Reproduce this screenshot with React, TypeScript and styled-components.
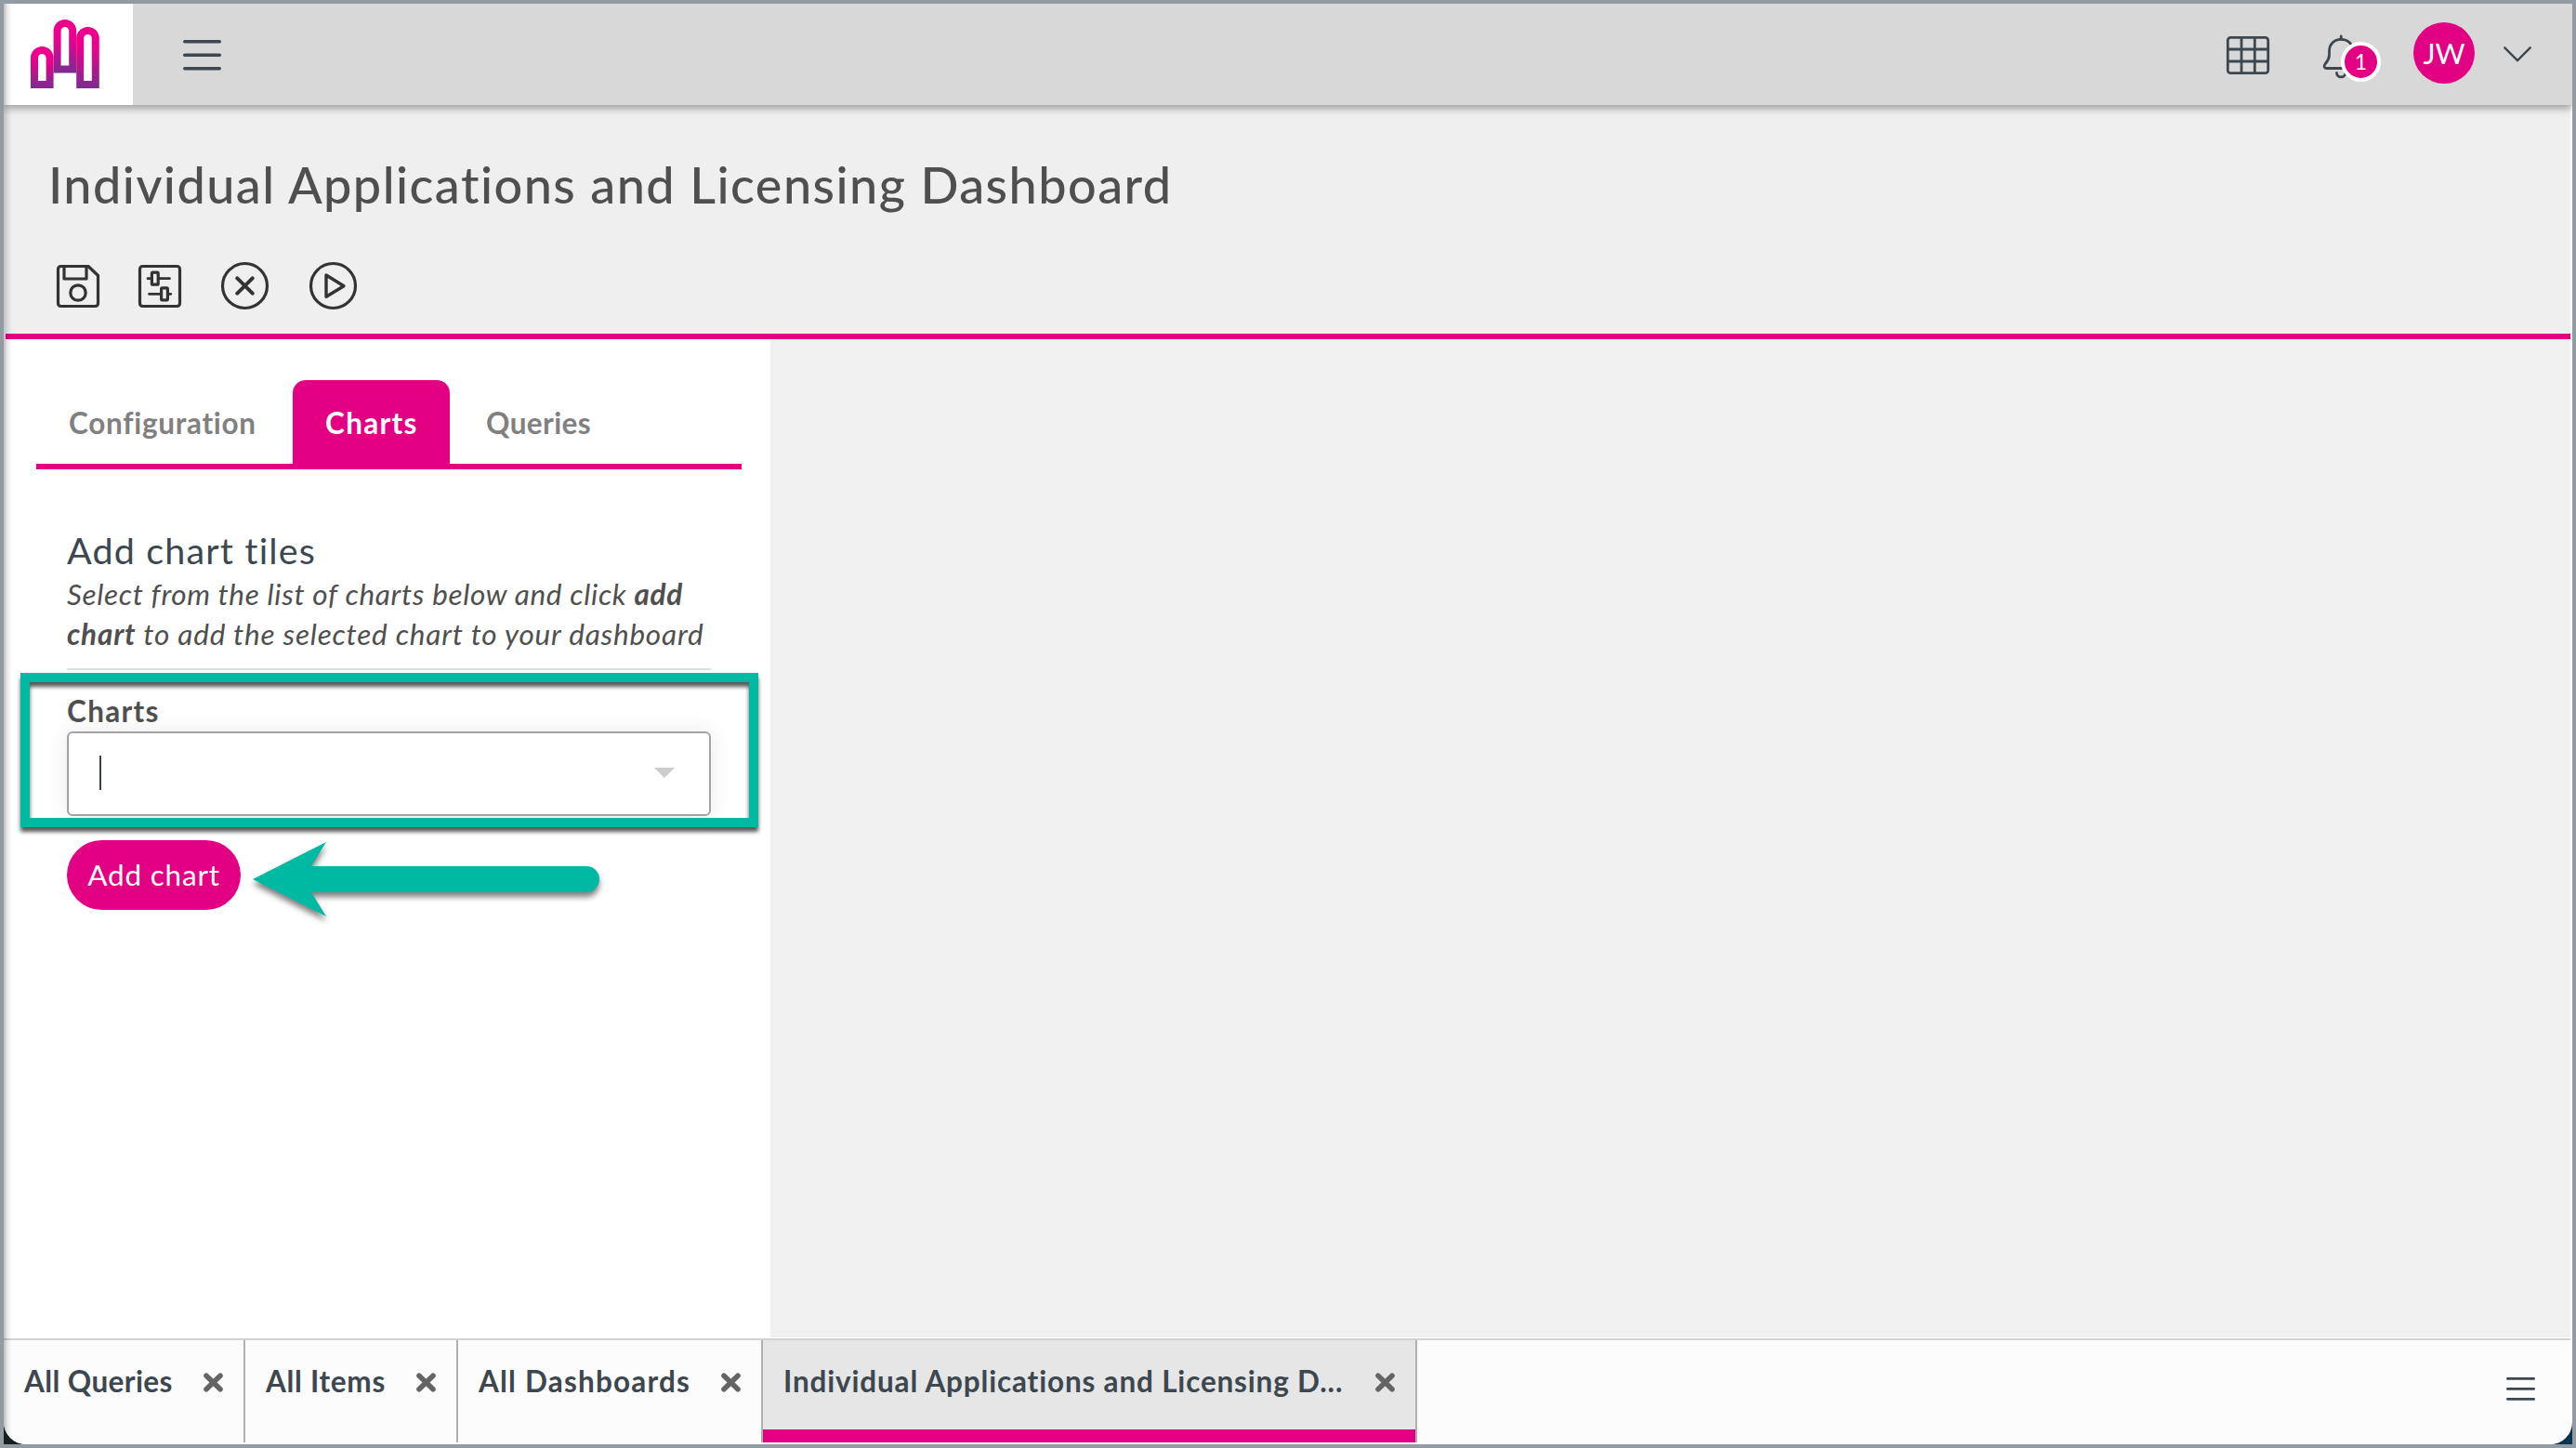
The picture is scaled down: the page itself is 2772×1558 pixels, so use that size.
import React from "react";
import styled, { createGlobalStyle } from "styled-components";

const PINK = "#e20083";
const TEAL = "#00b9a3";
const SLATE = "#3d474f";
const INK = "#4f4f4f";

const GlobalStyle = createGlobalStyle`
  * { box-sizing: border-box; }
  body { margin: 0; font-family: Lato, "Open Sans", sans-serif; color: ${INK}; }
  button, p, h1, h2, ul { margin: 0; padding: 0; font: inherit; letter-spacing: inherit; }
  button { border: 0; background: none; color: inherit; cursor: pointer; }
  svg { display: block; flex: none; overflow: visible; }
`;

const Desktop = styled.div`
  width: 2772px;
  height: 1558px;
  border: 4px solid #929ba1;
  background: linear-gradient(90deg, #16211f, #0c3350);
  overflow: hidden;
`;

const Window = styled.div`
  position: relative;
  display: flex;
  flex-direction: column;
  height: 1550px;
  background: #fff;
  border-radius: 0 0 24px 24px;
  overflow: hidden;
`;

const EdgeShade = styled.div`
  position: absolute;
  z-index: 5;
  left: 0;
  top: 0;
  bottom: 0;
  width: 9px;
  pointer-events: none;
  background: linear-gradient(90deg, rgba(0, 0, 0, 0.26), rgba(0, 0, 0, 0.08) 45%, rgba(0, 0, 0, 0));
`;

const Header = styled.header`
  position: relative;
  z-index: 2;
  display: flex;
  align-items: center;
  flex: none;
  height: 109px;
  background: #d8d8d8;
  box-shadow: 0 3px 9px rgba(0, 0, 0, 0.38);
`;

const LogoBox = styled.div`
  width: 139px;
  height: 109px;
  padding: 17px 0 0 29px;
  background: #fff;
`;

const MenuButton = styled.button`
  margin: 2px 0 0 54px;
`;

const HeaderActions = styled.div`
  display: flex;
  align-items: center;
  margin-left: auto;
  padding: 2px 44px 0 0;
`;

const BellButton = styled.button`
  position: relative;
  margin-left: 56px;
  width: 64px;
  height: 50px;
`;

const Badge = styled.span`
  position: absolute;
  left: 21px;
  top: 10px;
  width: 43px;
  height: 43px;
  border: 4px solid #fff;
  border-radius: 50%;
  background: ${PINK};
  color: #fff;
  font-size: 23px;
  line-height: 34px;
  text-align: center;
`;

const Avatar = styled.div`
  width: 66px;
  height: 66px;
  margin: 0 31px 5px 35px;
  border-radius: 50%;
  background: ${PINK};
  color: #fff;
  font-size: 31px;
  font-weight: 400;
  line-height: 66px;
  text-align: center;
`;

const TitleArea = styled.section`
  flex: none;
  height: 252px;
  margin: 0 2px;
  padding: 56px 0 0 46px;
  background: #efefef;
  border-bottom: 6px solid ${PINK};
`;

const Title = styled.h1`
  font-size: 54px;
  font-weight: 500;
  line-height: 60px;
  letter-spacing: 1.44px;
`;

const Toolbar = styled.div`
  display: flex;
  align-items: center;
  height: 51px;
  margin-top: 53px;
  padding-left: 9px;
`;

const Tool = styled.button<{ $gap: number }>`
  margin-right: ${(p) => p.$gap}px;
`;

const Body = styled.div`
  display: flex;
  flex: none;
  height: 1074px;
  margin-right: 2px;
`;

const Sidebar = styled.aside`
  position: relative;
  width: 825px;
  padding: 44px 31px 0 35px;
  background: #fff;
`;

const Canvas = styled.main`
  flex: 1;
  background: #f0f0f0;
`;

const Tabs = styled.div`
  display: flex;
  height: 96px;
  border-bottom: 6px solid ${PINK};
`;

const Tab = styled.button<{ $active?: boolean; $width: number; $inset: number; $spacing: number }>`
  width: ${(p) => p.$width}px;
  height: 90px;
  padding: 1px 0 0 ${(p) => p.$inset}px;
  text-align: left;
  font-size: 31.5px;
  font-weight: 700;
  letter-spacing: ${(p) => p.$spacing}px;
  border-radius: 14px 14px 0 0;
  color: ${(p) => (p.$active ? "#fff" : "#808080")};
  background: ${(p) => (p.$active ? PINK : "transparent")};
`;

const Panel = styled.div`
  width: 693px;
  margin: 65px 0 0 33px;
`;

const PanelTitle = styled.h2`
  color: ${SLATE};
  font-size: 39.5px;
  font-weight: 400;
  line-height: 44px;
  letter-spacing: 1.15px;
`;

const Hint = styled.p`
  height: 107px;
  padding-top: 4px;
  border-bottom: 2px solid #dfdfdf;
  font-size: 31.5px;
  font-style: italic;
  line-height: 43px;
  white-space: nowrap;
`;

const HintLine = styled.span<{ $spacing: number }>`
  display: block;
  letter-spacing: ${(p) => p.$spacing}px;
`;

const Label = styled.label`
  display: block;
  margin-top: 24px;
  font-size: 31.5px;
  font-weight: 700;
  line-height: 40px;
  letter-spacing: 1.3px;
`;

const Select = styled.div`
  display: flex;
  align-items: center;
  justify-content: space-between;
  height: 91px;
  margin-top: 2px;
  padding: 0 37px 2px 33px;
  border: 2px solid #a3a3a3;
  border-radius: 6px;
  background: #fff;
  box-shadow: 0 0 24px rgba(0, 0, 0, 0.09);
`;

const Caret = styled.span`
  width: 2px;
  height: 37px;
  background: #36424c;
`;

const AddButton = styled.button`
  display: block;
  width: 187px;
  height: 75px;
  margin-top: 26px;
  border-radius: 38px;
  background: ${PINK};
  color: #fff;
  font-size: 31.5px;
  line-height: 73px;
  letter-spacing: 0.8px;
`;

const Highlight = styled.div`
  position: absolute;
  left: 18px;
  top: 359px;
  width: 794px;
  height: 166px;
  border: 10px solid ${TEAL};
  filter: drop-shadow(0 5px 2px rgba(0, 0, 0, 0.65));
`;

const Arrow = styled.svg`
  position: absolute;
  left: 268px;
  top: 541px;
  filter: drop-shadow(0 5px 3px rgba(0, 0, 0, 0.5));
`;

const Footer = styled.footer`
  display: flex;
  flex: none;
  height: 115px;
  margin: 1px 2px 0 0;
  padding-bottom: 2px;
  border-top: 2px solid #d0d3d2;
  background: #fcfcfc;
`;

const PageTab = styled.div<{ $width: number; $spacing: number; $active?: boolean }>`
  display: flex;
  justify-content: space-between;
  width: ${(p) => p.$width}px;
  height: 110px;
  padding: 25px 22px 0 22px;
  border-right: 2px solid #b0b0b0;
  color: ${SLATE};
  background: ${(p) => (p.$active ? "#e6e6e6" : "transparent")};
  background-image: ${(p) => (p.$active ? `linear-gradient(${PINK}, ${PINK})` : "none")};
  background-size: 100% 14px;
  background-position: bottom;
  background-repeat: no-repeat;
  font-size: 31.5px;
  font-weight: 700;
  line-height: 38px;
  letter-spacing: ${(p) => p.$spacing}px;
  white-space: nowrap;
`;

const CloseButton = styled.button`
  height: 21px;
  margin-top: 10px;
`;

const FooterMenu = styled.button`
  margin: 40px 38px 0 auto;
  height: 25px;
`;

const bars = [
  { x: 4, top: 33, bottom: 70 },
  { x: 28.6, top: 4, bottom: 53.5 },
  { x: 53.2, top: 12, bottom: 70 },
];

const Logo = () => (
  <svg width="75" height="75" fill="none" strokeWidth="8">
    {bars.map((b, i) => (
      <g key={i}>
        <linearGradient id={`bar${i}`} gradientUnits="userSpaceOnUse" x1="0" x2="0" y1={b.top} y2={b.bottom + 4}>
          <stop offset="0.3" stopColor="#ec008c" />
          <stop offset="1" stopColor="#7a2d90" />
        </linearGradient>
        <path
          stroke={`url(#bar${i})`}
          d={`M${b.x} ${b.bottom}V${b.top + 8.2}a8.3 8.2 0 0 1 16.6 0V${b.bottom}z`}
        />
      </g>
    ))}
  </svg>
);

const Lines = ({ width, step, stroke }: { width: number; step: number; stroke: number }) => {
  const r = stroke / 2;
  return (
    <svg width={width} height={step * 2 + stroke} stroke={SLATE} strokeWidth={stroke} strokeLinecap="round">
      {[0, 1, 2].map((n) => (
        <path key={n} d={`M${r} ${r + n * step}H${width - r}`} />
      ))}
    </svg>
  );
};

const tool = { fill: "none", stroke: "#333", strokeWidth: 3.2, strokeLinecap: "round", strokeLinejoin: "round" } as const;

const SaveIcon = () => (
  <svg width="46" height="46" {...tool}>
    <path d="M4.5 1.5H34L44.5 11.5V41.5a3 3 0 0 1-3 3H4.5a3 3 0 0 1-3-3V4.5a3 3 0 0 1 3-3z" />
    <path d="M8 2V15H32V2" />
    <circle cx="23" cy="30" r="8.2" />
  </svg>
);

const SettingsIcon = () => (
  <svg width="46" height="46" {...tool}>
    <rect x="1.5" y="1.5" width="43" height="43" rx="3" />
    <path strokeWidth="2.8" d="M10 14.7H14M22 14.7H33.5M11.5 31.3H24M32 31.3H34.8" />
    <rect x="14.4" y="8.2" width="6.8" height="13" rx="1" />
    <rect x="24.6" y="24.8" width="6.8" height="13" rx="1" />
  </svg>
);

const CancelIcon = () => (
  <svg width="51" height="51" {...tool}>
    <circle cx="25.5" cy="25.5" r="24" />
    <path strokeWidth="4" d="M17.3 17.3L33.7 33.7M33.7 17.3L17.3 33.7" />
  </svg>
);

const PlayIcon = () => (
  <svg width="51" height="51" {...tool}>
    <circle cx="25.5" cy="25.5" r="24" />
    <path strokeWidth="3.4" d="M18 14V37.3L37 25.7z" />
  </svg>
);

const GridIcon = () => (
  <svg width="46" height="41" fill="none" stroke={SLATE} strokeWidth="2.8">
    <rect x="1.3" y="1.3" width="43.4" height="38.4" rx="3" />
    <path d="M1 14H45M1 27H45M16 1V40M30.3 1V40" />
  </svg>
);

const BellIcon = () => (
  <svg width="44" height="50" fill="none" stroke={SLATE} strokeWidth="2.8" strokeLinecap="round" strokeLinejoin="round">
    <path d="M21.2 4V7" />
    <path d="M21.2 7.3C13.5 7.3 8.5 13 8.5 20v4c0 5-2.2 7.2-4.4 9.8-2 2.4-1 4.7 1.4 4.7H37c2.4 0 3.4-2.3 1.4-4.7-2.2-2.6-4.4-4.8-4.4-9.8v-4c0-7-5-12.7-12.8-12.7z" />
    <path d="M16.5 43.5c0 2.6 2.2 4.3 4.7 4.3s4.7-1.7 4.7-4.3" />
  </svg>
);

const CloseIcon = () => (
  <svg width="21" height="21" stroke="#646464" strokeWidth="5.6" strokeLinecap="round">
    <path d="M3 3.2L18 17.8M18 3.2L3 17.8" />
  </svg>
);

const pages = [
  { name: "All Queries", width: 260, spacing: 0.4 },
  { name: "All Items", width: 229, spacing: 0.7 },
  { name: "All Dashboards", width: 328, spacing: 1.2 },
  { name: "Individual Applications and Licensing D...", width: 704, spacing: 0.82, active: true },
];

export default function App() {
  return (
    <Desktop>
      <GlobalStyle />
      <Window>
        <EdgeShade />
        <Header>
          <LogoBox>
            <Logo />
          </LogoBox>
          <MenuButton aria-label="Menu">
            <Lines width={41} step={14.5} stroke={3.6} />
          </MenuButton>
          <HeaderActions>
            <GridIcon />
            <BellButton aria-label="Notifications">
              <BellIcon />
              <Badge>1</Badge>
            </BellButton>
            <Avatar>JW</Avatar>
            <svg width="30" height="17" fill="none" stroke={SLATE} strokeWidth="2.4" strokeLinecap="round">
              <path d="M1.3 0.3L15 14L28.7 0.3" />
            </svg>
          </HeaderActions>
        </Header>
        <TitleArea>
          <Title>Individual Applications and Licensing Dashboard</Title>
          <Toolbar>
            <Tool $gap={42} aria-label="Save"><SaveIcon /></Tool>
            <Tool $gap={43} aria-label="Settings"><SettingsIcon /></Tool>
            <Tool $gap={44} aria-label="Cancel"><CancelIcon /></Tool>
            <Tool $gap={0} aria-label="Run"><PlayIcon /></Tool>
          </Toolbar>
        </TitleArea>
        <Body>
          <Sidebar>
            <Tabs>
              <Tab $width={276} $inset={35} $spacing={0.7}>Configuration</Tab>
              <Tab $width={169} $inset={35} $spacing={1.3} $active>Charts</Tab>
              <Tab $width={200} $inset={39} $spacing={0.4}>Queries</Tab>
            </Tabs>
            <Panel>
              <PanelTitle>Add chart tiles</PanelTitle>
              <Hint>
                <HintLine $spacing={0.67}>
                  Select from the list of charts below and click <b>add</b>
                </HintLine>
                <HintLine $spacing={0.8}>
                  <b>chart</b> to add the selected chart to your dashboard
                </HintLine>
              </Hint>
              <Label>Charts</Label>
              <Select>
                <Caret />
                <svg width="22" height="11" fill="#ccc">
                  <path d="M0 0H22L11 11z" />
                </svg>
              </Select>
              <AddButton>Add chart</AddButton>
            </Panel>
            <Highlight />
            <Arrow width="373" height="80" fill={TEAL}>
              <path d="M0 40L79 0L63 26H359a14 14 0 0 1 0 28H63L79 80z" />
            </Arrow>
          </Sidebar>
          <Canvas />
        </Body>
        <Footer>
          {pages.map((p) => (
            <PageTab key={p.name} $width={p.width} $spacing={p.spacing} $active={p.active}>
              <span>{p.name}</span>
              <CloseButton aria-label="Close"><CloseIcon /></CloseButton>
            </PageTab>
          ))}
          <FooterMenu aria-label="Open pages">
            <Lines width={31} step={11} stroke={2.8} />
          </FooterMenu>
        </Footer>
      </Window>
    </Desktop>
  );
}
